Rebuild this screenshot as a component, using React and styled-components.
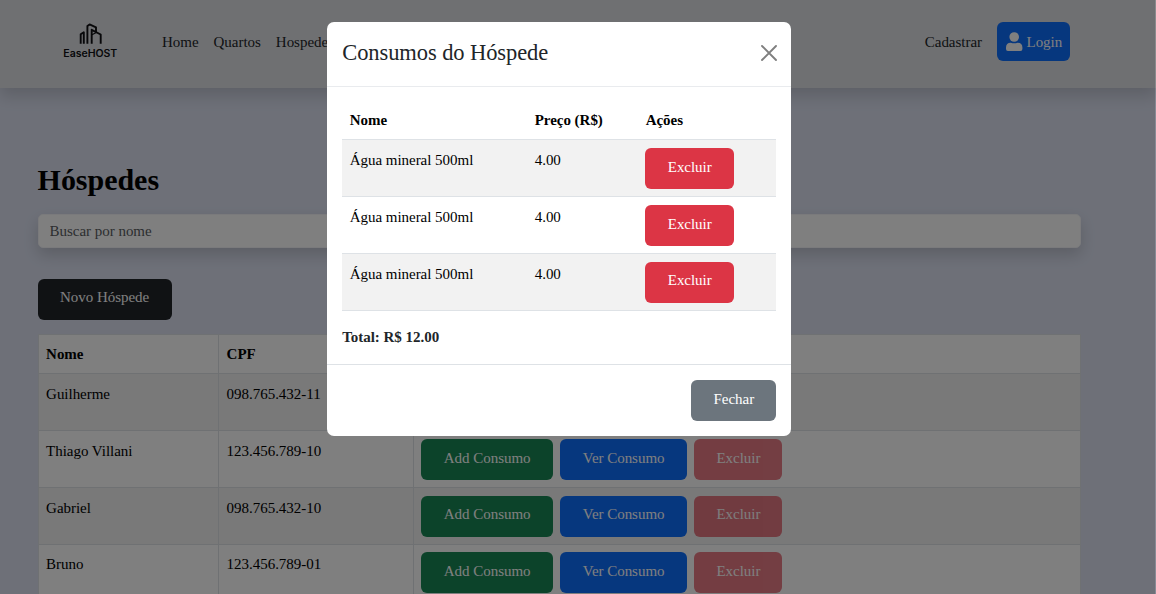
import React from "react";
import styled, { createGlobalStyle } from "styled-components";

const GlobalStyle = createGlobalStyle`
  * { box-sizing: border-box; }
  html, body { margin: 0; height: 100%; overflow: hidden; }
  body {
    background: #dce1f1;
    font-family: "Liberation Serif", "Times New Roman", serif;
    font-size: 15px;
    line-height: 22.5px;
    letter-spacing: -0.03px;
    color: #212529;
  }
`;

const Page = styled.div`
  height: 594px;
  overflow: hidden;
`;

const Header = styled.header`
  height: 88px;
  background: #dfe0e4;
  box-shadow: 0 8px 15px rgba(0, 0, 0, 0.15);
  display: flex;
  align-items: flex-start;
  padding: 22px 86px 0 60px;
`;

const Logo = styled.svg`
  width: 60px;
  height: 40px;
  margin-right: 42px;
`;

const Nav = styled.nav`
  display: flex;
  gap: 15px;
  padding-top: 9px;
  flex: 1;
`;

const NavLink = styled.a`
  color: #212529;
`;

const Account = styled.div`
  display: flex;
  align-items: flex-start;
  gap: 15px;
  ${NavLink} { padding-top: 9px; }
`;

const LoginButton = styled.button`
  display: flex;
  align-items: flex-start;
  gap: 3.5px;
  height: 39px;
  width: 73px;
  padding: 9px 0 0 9px;
  border: 0;
  border-radius: 6px;
  background: #0d6efd;
  color: #fff;
  font: inherit;
  letter-spacing: inherit;
`;

const UserIcon = styled.svg`
  flex: none;
  width: 17px;
  height: 20px;
`;

const Main = styled.main`
  padding: 73px 75.5px 0 37.6px;
`;

const Title = styled.h1`
  margin: 0 0 15px;
  font-size: 30px;
  line-height: 38px;
  font-weight: 700;
  color: #000;
`;

const Search = styled.input`
  display: block;
  width: 100%;
  height: 34px;
  padding: 0 11px;
  border: 1px solid #f4f5f8;
  border-radius: 5px;
  background: #fff;
  font: inherit;
  letter-spacing: inherit;
  box-shadow: 0 7px 15px rgba(0, 0, 0, 0.16);
  &::placeholder { color: #595c5f; opacity: 1; }
`;

const variants = {
  dark: "#212529",
  success: "#198754",
  primary: "#0d6efd",
  danger: "#dc3545",
  secondary: "#6c757d",
};

const Button = styled.button`
  display: block;
  flex: none;
  width: ${(p) => p.$width}px;
  height: 41px;
  margin: 0;
  padding: 0 0 3px;
  border: 0;
  border-radius: 6px;
  background: ${(p) => variants[p.$variant]};
  color: #fff;
  font: inherit;
  letter-spacing: inherit;
  opacity: ${(p) => (p.disabled ? 0.65 : 1)};
`;

const Toolbar = styled.div`
  padding: 30.6px 0 14.8px;
`;

const Table = styled.table`
  width: 100%;
  table-layout: fixed;
  border-collapse: collapse;
  background: #fff;
  color: #000;
`;

const Row = styled.tr`
  height: 56.8px;
  background: ${(p) => (p.$striped ? "#f2f2f2" : "#fff")};
`;

const HeadRow = styled.tr`
  height: 38.9px;
`;

const Cell = styled.td`
  width: ${(p) => (p.$width ? `${p.$width}px` : "auto")};
  padding: 8.8px 7.5px 0;
  vertical-align: top;
  text-align: left;
  border: 0 solid #dee2e6;
  border-bottom-width: 1px;
  ${(p) => p.$bordered && "border-width: 1px;"}
`;

const HeadCell = styled(Cell)`
  padding-top: 7.5px;
`;

const ActionCell = styled(Cell)`
  padding: 7.7px 7.3px 0;
`;

const Actions = styled.div`
  display: flex;
  gap: 7.5px;
`;

const Backdrop = styled.div`
  position: fixed;
  inset: 0;
  background: rgba(0, 0, 0, 0.5);
  background-clip: padding-box;
  border-right: 1px solid rgba(0, 0, 0, 0.38);
  display: flex;
  align-items: flex-start;
  padding: 22px 0 0 327.3px;
`;

const Dialog = styled.section`
  width: 464px;
  height: 414px;
  border-radius: 7px;
  background: #fff;
`;

const DialogHeader = styled.div`
  display: flex;
  justify-content: space-between;
  height: 64.5px;
  padding: 15px 14px 0 15px;
  border-bottom: 1px solid #e9ebee;
`;

const DialogTitle = styled.h2`
  margin: 0;
  font-size: 22.5px;
  line-height: 32px;
  font-weight: 400;
  letter-spacing: -0.09px;
`;

const CloseIcon = styled.svg`
  width: 16px;
  height: 16px;
  margin-top: 8.2px;
`;

const DialogBody = styled.div`
  height: 278.5px;
  padding: 14.5px 15px 0 14.9px;
  border-bottom: 1px solid #dee2e6;
`;

const Total = styled.strong`
  display: block;
  margin-top: 15px;
`;

const DialogFooter = styled.div`
  display: flex;
  justify-content: flex-end;
  padding: 15px;
`;

const guests = [
  ["Guilherme", "098.765.432-11"],
  ["Thiago Villani", "123.456.789-10"],
  ["Gabriel", "098.765.432-10"],
  ["Bruno", "123.456.789-01"],
];

const items = [
  ["Água mineral 500ml", "4.00"],
  ["Água mineral 500ml", "4.00"],
  ["Água mineral 500ml", "4.00"],
];

function EaseHostLogo() {
  return (
    <Logo viewBox="0 0 60 40">
      <g fill="none" stroke="#101114" strokeWidth="1.9" strokeLinejoin="round">
        <path d="M20.700 21.800V12.300L23.800 10.200V21.800" />
        <path d="M27.400 21.800V4L29.600 2.400L36 5.300V10" />
        <path d="M31.700 21.800V7.800L40.700 12.500V21.800" />
        <path d="M32 12.800L36.300 10.500" strokeWidth="1.200" />
      </g>
      <text x="3.300" y="34.500" textLength="54" lengthAdjust="spacingAndGlyphs" fontFamily="Inter, sans-serif" fontSize="10" fontWeight="600" fill="#101114">
        EaseHOST
      </text>
    </Logo>
  );
}

export default function App() {
  return (
    <>
      <GlobalStyle />
      <Page>
        <Header>
          <EaseHostLogo />
          <Nav>
            <NavLink>Home</NavLink>
            <NavLink>Quartos</NavLink>
            <NavLink>Hospedes</NavLink>
          </Nav>
          <Account>
            <NavLink>Cadastrar</NavLink>
            <LoginButton>
              <UserIcon viewBox="0 0 17 20" fill="#fff">
                <circle cx="8.200" cy="6" r="4.800" />
                <path d="M0 18V16.500Q0 11.700 4.800 11.700Q8.200 13 11.600 11.700Q16.400 11.700 16.400 16.500V18Q16.400 20 14.500 20H1.900Q0 20 0 18Z" />
              </UserIcon>
              Login
            </LoginButton>
          </Account>
        </Header>
        <Main>
          <Title>Hóspedes</Title>
          <Search placeholder="Buscar por nome" />
          <Toolbar>
            <Button $variant="dark" $width={134}>Novo Hóspede</Button>
          </Toolbar>
          <Table>
            <thead>
              <HeadRow>
                <HeadCell as="th" $bordered $width={180.5}>Nome</HeadCell>
                <HeadCell as="th" $bordered $width={195}>CPF</HeadCell>
                <HeadCell as="th" $bordered>Ações</HeadCell>
              </HeadRow>
            </thead>
            <tbody>
              {guests.map(([name, cpf], i) => (
                <Row key={cpf} $striped={i % 2 === 0}>
                  <Cell $bordered>{name}</Cell>
                  <Cell $bordered>{cpf}</Cell>
                  <ActionCell $bordered>
                    <Actions>
                      <Button $variant="success" $width={131.5}>Add Consumo</Button>
                      <Button $variant="primary" $width={126.5}>Ver Consumo</Button>
                      <Button $variant="danger" $width={88} disabled>Excluir</Button>
                    </Actions>
                  </ActionCell>
                </Row>
              ))}
            </tbody>
          </Table>
        </Main>
      </Page>
      <Backdrop>
        <Dialog role="dialog">
          <DialogHeader>
            <DialogTitle>Consumos do Hóspede</DialogTitle>
            <CloseIcon viewBox="0 0 16 16">
              <path d="M1 1l14 14M15 1L1 15" stroke="#7f7f7f" strokeWidth="1.900" strokeLinecap="round" />
            </CloseIcon>
          </DialogHeader>
          <DialogBody>
            <Table>
              <thead>
                <HeadRow>
                  <HeadCell as="th" $width={185}>Nome</HeadCell>
                  <HeadCell as="th" $width={111}>Preço (R$)</HeadCell>
                  <HeadCell as="th">Ações</HeadCell>
                </HeadRow>
              </thead>
              <tbody>
                {items.map(([name, price], i) => (
                  <Row key={i} $striped={i % 2 === 0}>
                    <Cell>{name}</Cell>
                    <Cell>{price}</Cell>
                    <ActionCell>
                      <Button $variant="danger" $width={88.5}>Excluir</Button>
                    </ActionCell>
                  </Row>
                ))}
              </tbody>
            </Table>
            <Total>Total: R$ 12.00</Total>
          </DialogBody>
          <DialogFooter>
            <Button $variant="secondary" $width={85}>Fechar</Button>
          </DialogFooter>
        </Dialog>
      </Backdrop>
    </>
  );
}
